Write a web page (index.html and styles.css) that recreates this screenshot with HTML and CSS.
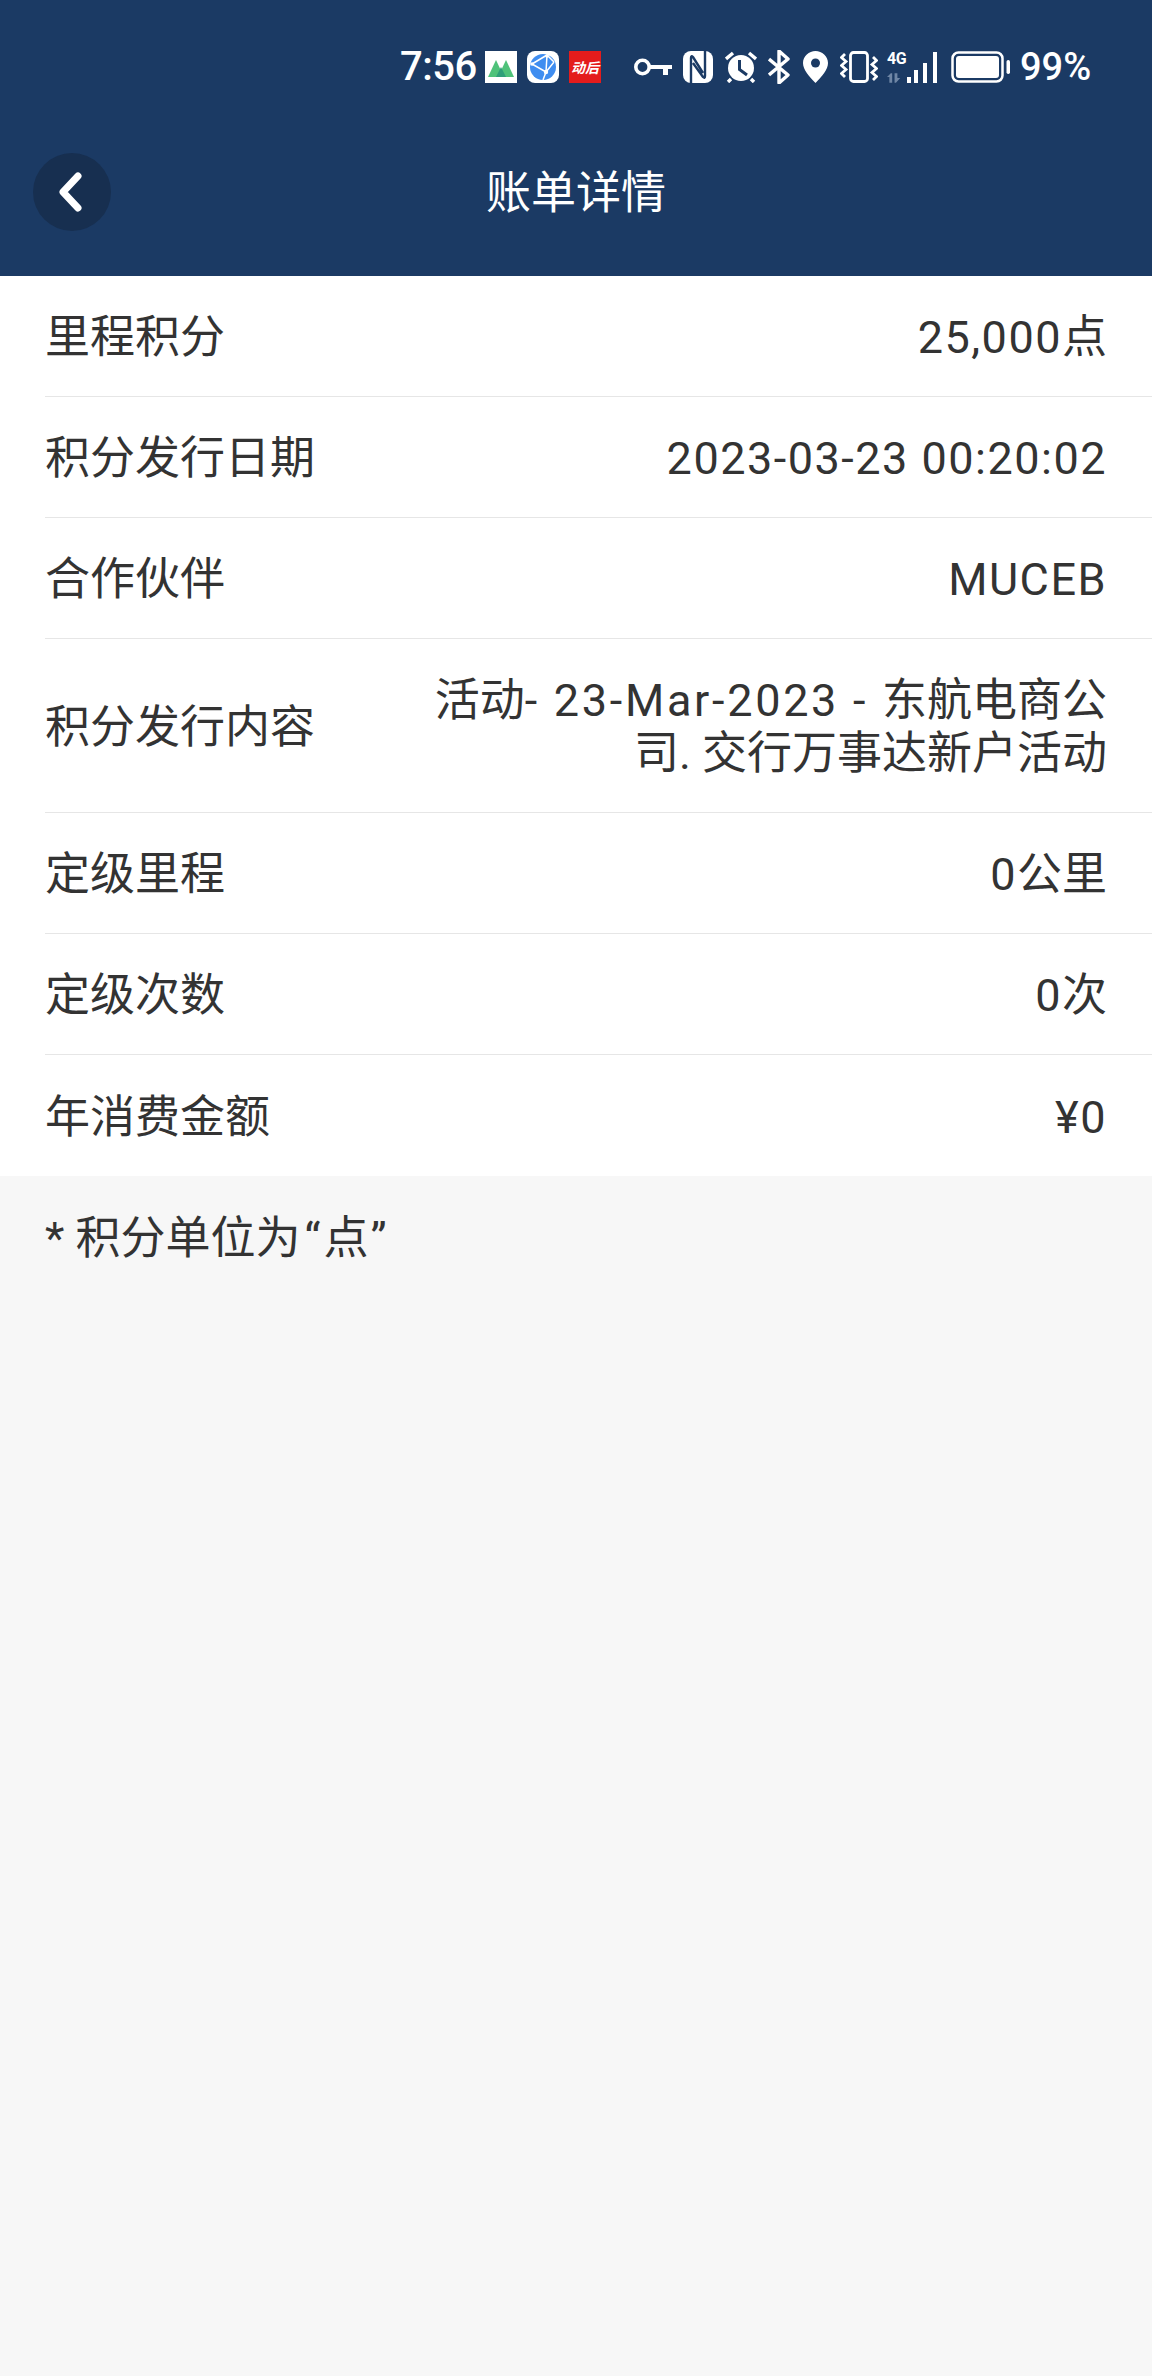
FILE: index.html
```html
<!DOCTYPE html>
<html lang="zh-CN">
<head>
<meta charset="utf-8">
<title>账单详情</title>
<link rel="stylesheet" href="styles.css">
</head>
<body>
<header class="header">
  <div class="status">
    <span class="time">7:56</span>
    <svg class="ico ico-app" viewBox="0 0 32 32"><rect width="32" height="32" fill="#fff"/><path d="M3 26 L11 9 L19 26Z" fill="#4fc27a"/><path d="M13 26 L21 9 L29 26Z" fill="#4fc27a"/><path d="M11 26 L16 16 L21 26Z" fill="#2f9f79"/></svg>
    <svg class="ico ico-app" viewBox="0 0 32 32"><rect width="32" height="32" rx="8" fill="#fff"/><circle cx="16" cy="16" r="13" fill="#3f8df0"/><path d="M5 13 L20 4 M5 13 L19 21 L27 11 M19 21 L16 29 M20 4 L27 11 M20 4 L19 21" stroke="#fff" stroke-width="1.500" fill="none"/><circle cx="19" cy="21" r="2.200" fill="#fff"/><circle cx="5" cy="13" r="1.800" fill="#fff"/><circle cx="20" cy="5" r="1.800" fill="#fff"/></svg>
    <span class="badge-red">动后</span>
    <svg class="ico ico-key" viewBox="0 0 38 18"><circle cx="8.500" cy="9" r="6.700" fill="none" stroke="#fff" stroke-width="3.600"/><path d="M15 7 H38 V11 H34 V17 H29 V11 H15Z" fill="#fff"/></svg>
    <svg class="ico ico-nfc" viewBox="0 0 30 32"><rect width="30" height="32" rx="8" fill="#fff"/><path d="M8 32 V7 Q8 4 10 6 L20 22 M22 0 V25 Q22 28 20 26 L10 12" fill="none" stroke="#1b3a64" stroke-width="2.400"/></svg>
    <svg class="ico ico-alarm" viewBox="0 0 32 32"><circle cx="16" cy="17" r="13" fill="#fff"/><path d="M14.500 9 V18.500 L22 24" fill="none" stroke="#1b3a64" stroke-width="3"/><path d="M1 8 L8 2 M31 8 L24 2 M6 28 L3 31 M26 28 L29 31" stroke="#fff" stroke-width="3.400" fill="none"/></svg>
    <svg class="ico ico-bt" viewBox="0 0 22 34"><path d="M1 9 L20 25 L11 33 V1 L20 9 L1 25" fill="none" stroke="#fff" stroke-width="3.400" stroke-linejoin="round"/></svg>
    <svg class="ico ico-loc" viewBox="0 0 25 32"><path d="M12.500 32 C6 25 0 19 0 12 C0 5 6 0 12.500 0 C19 0 25 5 25 12 C25 19 19 25 12.500 32Z" fill="#fff"/><circle cx="12.500" cy="12" r="4.500" fill="#1b3a64"/></svg>
    <svg class="ico ico-vib" viewBox="0 0 38 32"><rect x="10.500" y="1.500" width="17" height="29" rx="3" fill="none" stroke="#fff" stroke-width="2.800"/><path d="M5 3 L1.500 6.500 L6 10.500 L1.500 14.500 L6 18.500 L1.500 22.500 L5 26 M33 6 L36.500 9.500 L32 13.500 L36.500 17.500 L32 21.500 L36.500 25.500 L33 29" fill="none" stroke="#fff" stroke-width="2.800"/></svg>
    <span class="net"><span class="net-4g">4G</span><svg class="net-arrows" viewBox="0 0 18 10"><path d="M4 0 L0 4 H2.500 V10 H5.500 V0Z M8 0 V10 H9.500 L14 5 H11 V0Z" fill="#6f86a5"/></svg></span>
    <svg class="ico ico-sig" viewBox="0 0 34 32"><path d="M2 26 H6 V32 H2Z M9 19 H13 V32 H9Z M18 12 H22 V32 H18Z M28 1 H32 V32 H28Z" fill="#fff"/></svg>
    <svg class="ico ico-bat" viewBox="0 0 59 32"><rect x="1.500" y="1.500" width="50" height="29" rx="6" fill="none" stroke="#fff" stroke-width="2.500"/><rect x="5" y="5" width="43" height="22" rx="3" fill="#fff"/><rect x="55.500" y="9" width="3.500" height="14" rx="1.700" fill="#fff"/></svg>
    <span class="pct">99%</span>
  </div>
  <div class="nav">
    <button class="back" type="button" aria-label="返回"><svg class="back-ico" viewBox="0 0 24 40"><path d="M20 4 L5 20 L20 36" fill="none" stroke="#fff" stroke-width="7" stroke-linecap="round" stroke-linejoin="round"/></svg></button>
    <h1 class="title">账单详情</h1>
  </div>
</header>
<main class="list">
  <div class="row"><span class="label">里程积分</span><span class="value"><span class="num">25,000</span>点</span></div>
  <div class="row"><span class="label">积分发行日期</span><span class="value"><span class="num">2023-03-23 00:20:02</span></span></div>
  <div class="row"><span class="label">合作伙伴</span><span class="value"><span class="num">MUCEB</span></span></div>
  <div class="row"><span class="label">积分发行内容</span><span class="value value-long">活动<span class="num-wide">- 23-Mar-2023 - </span>东航电商公司. 交行万事达新户活动</span></div>
  <div class="row"><span class="label">定级里程</span><span class="value"><span class="num">0</span>公里</span></div>
  <div class="row"><span class="label">定级次数</span><span class="value"><span class="num">0</span>次</span></div>
  <div class="row row-last"><span class="label">年消费金额</span><span class="value"><span class="num">¥0</span></span></div>
</main>
<p class="note">* 积分单位为<span class="q-open">“</span>点<span class="q-close">”</span></p>
</body>
</html>
```
FILE: styles.css
```css
* { box-sizing: border-box; }
html, body { margin: 0; padding: 0; }
body {
  width: 1152px;
  height: 2376px;
  background: #f7f7f7;
  color: #333;
  font-family: "Roboto", "Noto Sans CJK SC", sans-serif;
  overflow: hidden;
}
.header { height: 276px; background: #1b3a64; color: #fff; }
.status {
  height: 134px;
  display: flex;
  align-items: center;
  justify-content: flex-end;
  padding-right: 64px;
}
.time { font-size: 40px; font-weight: 500; letter-spacing: -0.5px; width: 85px; line-height: 1; flex: none; }
.pct { font-size: 38px; font-weight: 500; line-height: 1; margin-left: 10px; width: 68px; flex: none; }
.ico { display: block; flex: none; }
.ico-app { width: 32px; height: 32px; margin-right: 10px; }
.badge-red {
  flex: none;
  width: 32px;
  height: 32px;
  background: #e41c1c;
  color: #fff;
  font: italic 700 14px/32px "Noto Sans CJK SC", sans-serif;
  text-align: center;
  margin-right: 33px;
}
.ico-key { width: 38px; height: 18px; margin-right: 11px; }
.ico-nfc { width: 30px; height: 32px; margin-right: 12px; }
.ico-alarm { width: 32px; height: 32px; margin-right: 11px; }
.ico-bt { width: 22px; height: 34px; margin-right: 13px; }
.ico-loc { width: 25px; height: 32px; margin-right: 12px; }
.ico-vib { width: 38px; height: 32px; margin-right: 9px; }
.net { width: 18px; height: 32px; display: flex; flex-direction: column; flex: none; justify-content: space-between; }
.net-4g { font: 700 16px/16px "Roboto", sans-serif; letter-spacing: -0.5px; color: #fff; }
.net-arrows { width: 17px; height: 10px; display: block; }
.ico-sig { width: 34px; height: 32px; margin-right: 12px; }
.ico-bat { width: 59px; height: 32px; }
.nav {
  position: relative;
  height: 116px;
  display: flex;
  align-items: center;
  justify-content: center;
  padding-top: 3px;
}
.back {
  position: absolute;
  left: 33px;
  top: 19px;
  width: 78px;
  height: 78px;
  border: 0;
  padding: 0;
  border-radius: 50%;
  background: #172f50;
  display: flex;
  align-items: center;
  justify-content: center;
}
.back-ico { width: 24px; height: 40px; margin-left: -4px; display: block; }
.title { margin: 0; font-size: 45px; font-weight: 400; line-height: 60px; }
.list { background: #fff; padding-left: 45px; }
.row {
  display: flex;
  align-items: center;
  justify-content: space-between;
  min-height: 121px;
  padding: 35px 45px 32px 0;
  border-bottom: 1px solid #e6e6e6;
  font-size: 45px;
  line-height: 53px;
}
.row-last { border-bottom: 0; }
.label { flex: none; }
.value { text-align: right; }
.value-long { width: 690px; flex: none; }
.num { letter-spacing: 1.5px; }
.num-wide { letter-spacing: 2.7px; }
.note { margin: 0; padding: 36px 45px 0; font-size: 45px; line-height: 53px; }
.q-open { margin: 0 3px 0 4px; }
.q-close { margin-left: 2px; }
```
